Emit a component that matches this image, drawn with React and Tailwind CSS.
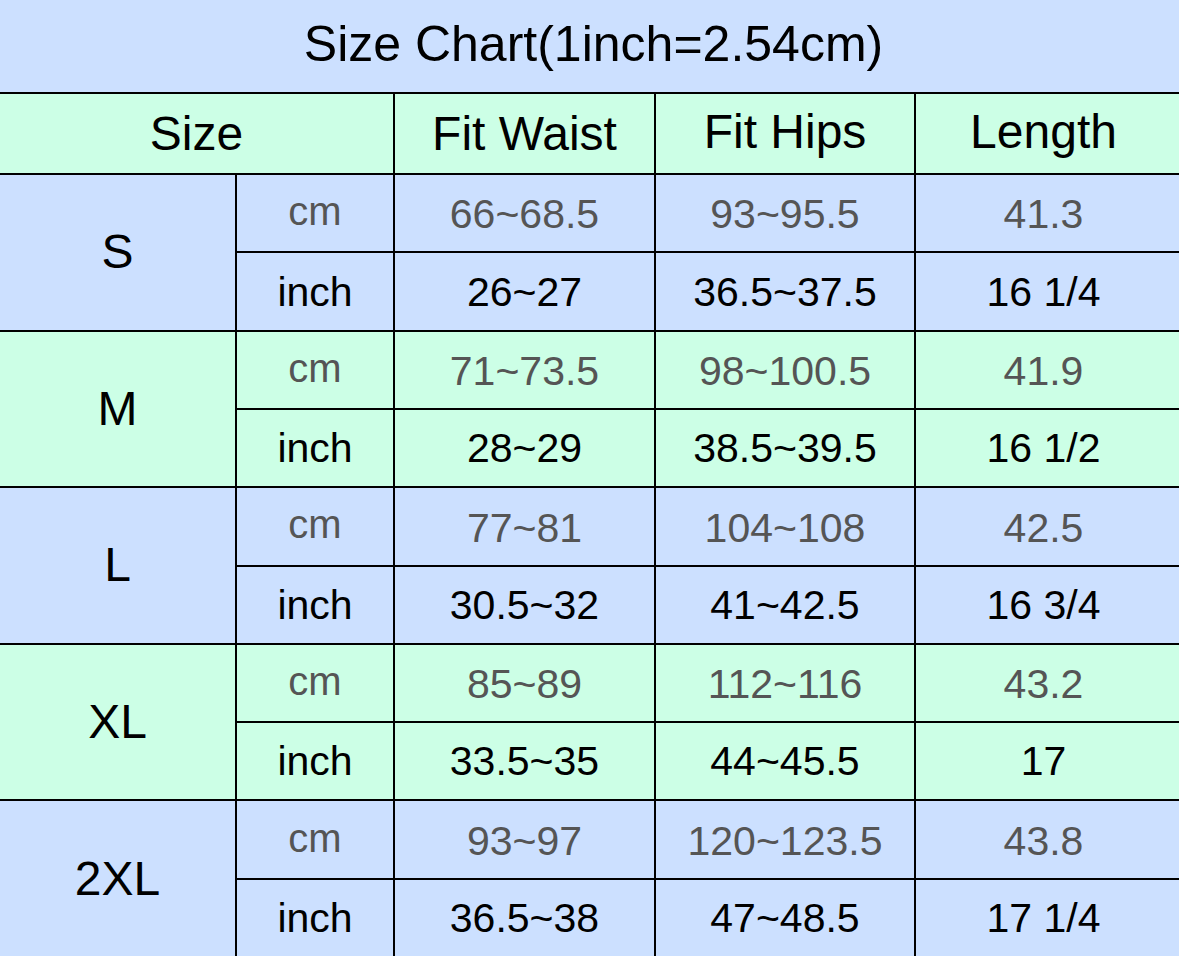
import React from 'react'

const rows = [
  { size: 'S', cm: ['66~68.5', '93~95.5', '41.3'], inch: ['26~27', '36.5~37.5', '16 1/4'], bg: 'bg-[#cce0ff]' },
  { size: 'M', cm: ['71~73.5', '98~100.5', '41.9'], inch: ['28~29', '38.5~39.5', '16 1/2'], bg: 'bg-[#ccffe6]' },
  { size: 'L', cm: ['77~81', '104~108', '42.5'], inch: ['30.5~32', '41~42.5', '16 3/4'], bg: 'bg-[#cce0ff]' },
  { size: 'XL', cm: ['85~89', '112~116', '43.2'], inch: ['33.5~35', '44~45.5', '17'], bg: 'bg-[#ccffe6]' },
  { size: '2XL', cm: ['93~97', '120~123.5', '43.8'], inch: ['36.5~38', '47~48.5', '17 1/4'], bg: 'bg-[#cce0ff]' },
]

const cell = 'flex items-center justify-center'
// last column text sits a little left of centre in the chart
const pad = ['', '', 'pr-2']

export default function App() {
  return (
    <div
      className="w-[1179px] h-[956px] bg-black grid grid-cols-[235px_156px_259px_258px_1fr] grid-rows-[92px_79px_repeat(10,minmax(0,1fr))] gap-[2px] overflow-hidden"
      style={{ fontFamily: '"Liberation Sans", Arial, sans-serif' }}
    >
      <div className={`${cell} col-span-5 bg-[#cce0ff] text-[50px] text-black pb-1 pl-2`}>
        Size Chart(1inch=2.54cm)
      </div>

      <div className={`${cell} col-span-2 bg-[#ccffe6] text-[48px] text-black`}>Size</div>
      <div className={`${cell} bg-[#ccffe6] text-[48px] text-black`}>Fit Waist</div>
      <div className={`${cell} bg-[#ccffe6] text-[48px] text-black pb-1`}>Fit Hips</div>
      <div className={`${cell} bg-[#ccffe6] text-[48px] text-black pb-1 pr-2`}>Length</div>

      {rows.map((r) => (
        <React.Fragment key={r.size}>
          <div className={`${cell} row-span-2 ${r.bg} text-[48px] text-black`}>{r.size}</div>
          <div className={`${cell} ${r.bg} text-[40px] text-[#555555] pb-1`}>cm</div>
          {r.cm.map((v, i) => (
            <div key={i} className={`${cell} ${r.bg} text-[41px] text-[#555555] pt-1 ${pad[i]}`}>
              {v}
            </div>
          ))}
          <div className={`${cell} ${r.bg} text-[41px] text-black pt-0.5`}>inch</div>
          {r.inch.map((v, i) => (
            <div key={i} className={`${cell} ${r.bg} text-[41px] text-black pt-0.5 ${pad[i]}`}>
              {v}
            </div>
          ))}
        </React.Fragment>
      ))}
    </div>
  )
}
